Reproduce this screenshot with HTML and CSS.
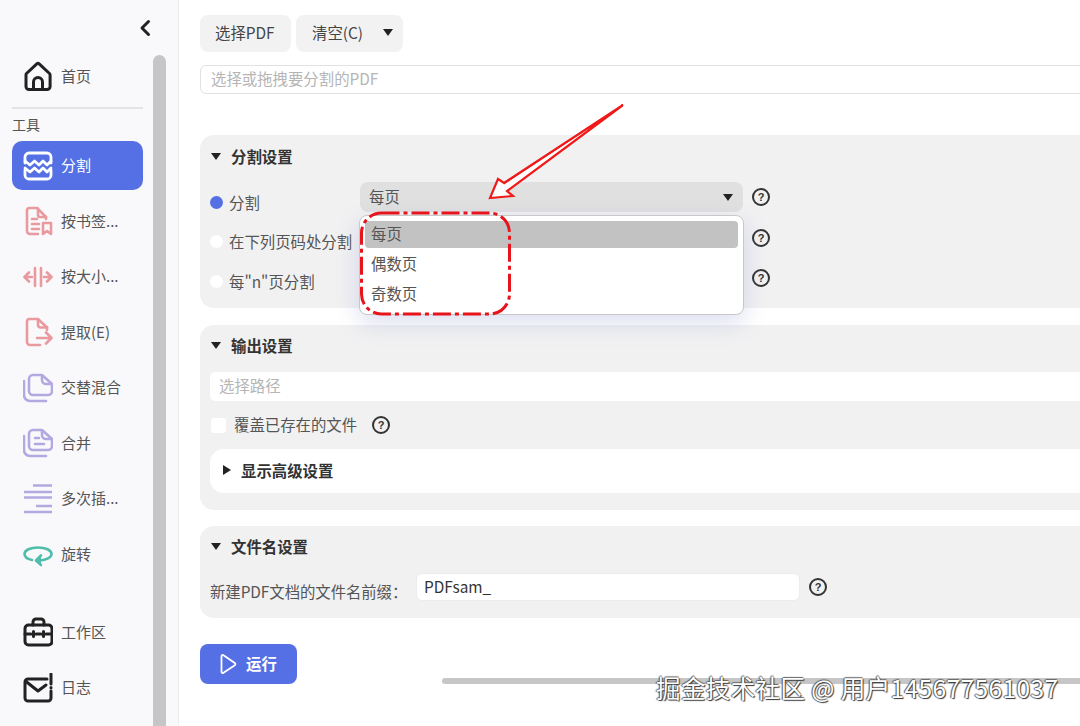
FILE: index.html
```html
<!DOCTYPE html>
<html lang="zh-CN">
<head>
<meta charset="utf-8">
<title>PDFsam 分割</title>
<link rel="stylesheet" href="styles.css">
</head>
<body>
<div class="app">
  <aside class="sidebar">
    <nav class="nav">
      <div class="collapse-row">
        <svg class="collapse-icon" viewBox="0 0 12 18"><path d="M9.5 2.5 3 9l6.5 6.5"/></svg>
      </div>
      <a class="nav-item">
        <svg class="icon" viewBox="0 0 30 30"><g class="st-dark"><path d="M3.500 12.500 13.800 2.800a1.800 1.800 0 0 1 2.400 0L26.500 12.500a2 2 0 0 1 .6 1.500v11.500a3 3 0 0 1-3 3H6a3 3 0 0 1-3-3V14a2 2 0 0 1 .5-1.500z"/><path d="M10.500 28v-7a4.500 4.500 0 0 1 9 0V28"/></g></svg>
        <span>首页</span>
      </a>
      <div class="divider"></div>
      <div class="nav-heading">工具</div>
      <div class="nav-list">
        <a class="nav-item active">
          <svg class="icon" viewBox="0 0 30 30"><g class="st-white"><path d="M2 12V6a4 4 0 0 1 4-4h18a4 4 0 0 1 4 4v6"/><path d="M2 19v5a4 4 0 0 0 4 4h18a4 4 0 0 0 4-4v-5"/><path d="M2 10l5 4 4.500-4 4.500 4 4-4 4 4 4-4"/><path d="M2 17l5 4 4.500-4 4.500 4 4-4 4 4 4-4"/></g></svg>
          <span>分割</span>
        </a>
        <a class="nav-item">
          <svg class="icon" viewBox="0 0 30 30"><g class="st-pink"><path d="M15 28H7a3 3 0 0 1-3-3V4.500A2.500 2.500 0 0 1 6.500 2H14l9 9v2"/><path d="M15 2.500V9a2 2 0 0 0 2 2h6"/><path d="M9 13h5M9 18h7M9 23h7"/><path d="M20 17h8v11l-4-3-4 3z"/></g></svg>
          <span>按书签...</span>
        </a>
        <a class="nav-item">
          <svg class="icon" viewBox="0 0 30 30"><g class="st-pink"><path d="M12 6v18M18 6v18"/><path d="M2 15h7M21 15h7"/><path d="M6 10.500 1.500 15 6 19.500M24 10.500l4.500 4.500-4.500 4.500" /></g></svg>
          <span>按大小...</span>
        </a>
        <a class="nav-item">
          <svg class="icon" viewBox="0 0 30 30"><g class="st-pink"><path d="M24 10v3M17 28H7a3 3 0 0 1-3-3V4.500A2.500 2.500 0 0 1 6.500 2H15l9 8.500"/><path d="M15 2.500V8a2.500 2.500 0 0 0 2.500 2.500H24"/><path d="M14 21h14M23 15.500l5.500 5.500-5.500 5.500"/></g></svg>
          <span>提取(E)</span>
        </a>
        <a class="nav-item">
          <svg class="icon" viewBox="0 0 30 30"><g class="st-purple"><path d="M10 2h9l10 9v7a4 4 0 0 1-4 4H10a4 4 0 0 1-4-4V6a4 4 0 0 1 4-4z"/><path d="M19 2.500V7a4 4 0 0 0 4 4h6"/><path d="M1 8v14a6 6 0 0 0 6 6h16"/></g></svg>
          <span>交替混合</span>
        </a>
        <a class="nav-item">
          <svg class="icon" viewBox="0 0 30 30"><g class="st-purple"><path d="M10 2h9l10 9v7a4 4 0 0 1-4 4H10a4 4 0 0 1-4-4V6a4 4 0 0 1 4-4z"/><path d="M19 2.500V7a4 4 0 0 0 4 4h6"/><path d="M1 8v14a6 6 0 0 0 6 6h16"/><path d="M12 10h4M12 16h9"/></g></svg>
          <span>合并</span>
        </a>
        <a class="nav-item">
          <svg class="icon" viewBox="0 0 30 30"><g class="st-purple st-butt"><path d="M10 1.500h19M1 8h28M1 13.500h28M13 22h16M1 28h28"/></g></svg>
          <span>多次插...</span>
        </a>
        <a class="nav-item">
          <svg class="icon" viewBox="0 0 30 30"><g class="st-teal"><path d="M9 21C4.500 20 1.500 18 1.500 15c0-4 6-6.500 13.500-6.500S28.500 11 28.500 15c0 3.500-5 6-12 6.500"/><path d="M18 16.500l-5 5 5 4.500" class="fill-teal"/></g></svg>
          <span>旋转</span>
        </a>
        <a class="nav-item spaced">
          <svg class="icon" viewBox="0 0 30 30"><g class="st-dark"><rect x="2" y="8" width="27" height="20" rx="3.500"/><path d="M10 8V5a3 3 0 0 1 3-3h5a3 3 0 0 1 3 3v3"/><path d="M2 17h6M13 17h5M23 17h6M10.500 14.500v5M20.500 14.500v5"/></g></svg>
          <span>工作区</span>
        </a>
        <a class="nav-item">
          <svg class="icon" viewBox="0 0 30 30"><g class="st-dark"><path d="M24 6H5a3 3 0 0 0-3 3v16a3 3 0 0 0 3 3h20a3 3 0 0 0 3-3V18"/><path d="M3 8.500 15 18l8-6"/><path d="M28 1v10M28 14.500v.5"/></g></svg>
          <span>日志</span>
        </a>
      </div>
    </nav>
    <div class="side-scroll"></div>
  </aside>

  <main class="main">
    <div class="toolbar">
      <button class="btn btn-pick">选择PDF</button>
      <button class="btn btn-menu">清空(C)<i class="tri tri-down"></i></button>
    </div>
    <div class="field file-field">选择或拖拽要分割的PDF</div>

    <section class="panel split-panel">
      <h2 class="panel-title"><i class="tri tri-down"></i>分割设置</h2>
      <div class="radio-row">
        <label class="radio-label"><i class="radio on"></i>分割</label>
        <div class="select"><span>每页</span><i class="tri tri-down"></i></div>
        <i class="help">?</i>
      </div>
      <div class="radio-row">
        <label class="radio-label"><i class="radio"></i>在下列页码处分割</label>
        <div class="select plain"></div>
        <i class="help">?</i>
      </div>
      <div class="radio-row">
        <label class="radio-label"><i class="radio"></i>每"n"页分割</label>
        <div class="select plain"></div>
        <i class="help">?</i>
      </div>
    </section>

    <section class="panel output-panel">
      <h2 class="panel-title"><i class="tri tri-down"></i>输出设置</h2>
      <div class="field path-field">选择路径</div>
      <div class="check-row">
        <i class="checkbox"></i><span>覆盖已存在的文件</span><i class="help">?</i>
      </div>
      <div class="advanced"><i class="tri tri-right"></i>显示高级设置</div>
    </section>

    <section class="panel name-panel">
      <h2 class="panel-title"><i class="tri tri-down"></i>文件名设置</h2>
      <div class="name-row">
        <label class="name-label">新建PDF文档的文件名前缀：</label>
        <div class="name-input">PDFsam_</div>
        <i class="help">?</i>
      </div>
    </section>

    <button class="run">
      <svg class="run-icon" viewBox="0 0 20 22"><path d="M3.500 3.200v15.600c0 1.200 1.100 1.700 2 1L16.800 12.300c.8-.6.8-1.800 0-2.400L5.500 2.200c-.9-.7-2-.2-2 1z"/></svg><span>运行</span>
    </button>
  </main>
</div>

<ul class="dropdown">
  <li class="selected">每页</li>
  <li>偶数页</li>
  <li>奇数页</li>
</ul>
<svg class="annotation" viewBox="0 0 1080 726">
  <rect class="dash" x="361.500" y="213" width="148" height="101" rx="20"/>
  <path class="arrow" d="M623 105 504 183 498 179 490 198 513 196 507 191Z"/>
  <path class="arrow-inner" d="M623 105 504 184"/>
</svg>
<div class="h-scroll"></div>
<div class="watermark">掘金技术社区 @ 用户145677561037</div>
</body>
</html>
```
FILE: styles.css
```css
* { box-sizing: border-box; }
html, body { margin: 0; height: 100%; overflow: hidden; background: #fff; }
body { font-family: "Noto Sans CJK SC", "Noto Sans", sans-serif; color: #555; font-size: 15.4px; }
i { font-style: normal; }

.app { display: flex; width: 1080px; height: 726px; overflow: hidden; }

/* Sidebar */
.sidebar { flex: 0 0 179px; display: flex; background: #f9f9fb; border-right: 1px solid #eee; }
.nav { flex: 0 0 153px; padding: 0 10px 0 12px; display: flex; flex-direction: column; }
.collapse-row { height: 51.5px; display: flex; justify-content: flex-end; padding-top: 18px; margin-right: -8px; align-items: flex-start; }
.collapse-icon { width: 12px; height: 20px; fill: none; stroke: #222; stroke-width: 3; stroke-linecap: round; stroke-linejoin: round; }
.nav-item { height: 49px; flex: none; display: flex; align-items: center; gap: 8px; padding-left: 11px; border-radius: 10px; font-size: 15px; color: #555; }
.nav-item span { padding-bottom: 2px; }
.nav-item.active { background: #5470e4; color: #fff; }
.nav-item.spaced { margin-top: 22.5px; }
.icon { width: 30px; height: 30px; flex: none; }
.icon g { fill: none; stroke-width: 2.6; stroke-linecap: round; stroke-linejoin: round; }
.st-dark { stroke: #222; stroke-width: 3 !important; }
.st-white { stroke: #fff; stroke-width: 2.8 !important; }
.st-pink { stroke: #e99a9f; }
.st-purple { stroke: #b3a8e0; }
.st-butt { stroke-linecap: butt !important; }
.st-teal { stroke: #4fbdab; }
.fill-teal { fill: #4fbdab; }
.divider { height: 2px; margin-top: 6.5px; background: #e4e4e6; }
.nav-heading { margin-top: 8px; height: 16px; line-height: 14px; font-size: 14px; color: #555; }
.nav-list { margin-top: 8px; display: flex; flex-direction: column; gap: 6.5px; }
.side-scroll { flex: 0 0 13px; margin-top: 55px; background: #c6c6c6; border-radius: 7px 7px 0 0; }

/* Main */
.main { flex: 1; min-width: 0; padding: 15px 0 0 21px; overflow: hidden; }
.toolbar { display: flex; gap: 5px; height: 37px; }
.btn { height: 37px; border: 0; border-radius: 8px; background: #f2f2f3; padding: 0 15px 3px; font: inherit; color: #444; display: flex; align-items: center; }
.btn-pick { width: 91px; }
.btn-menu { width: 107px; padding-left: 16px; justify-content: space-between; padding-right: 10px; }
.tri { display: inline-block; width: 0; height: 0; }
.tri-down { border-left: 5.5px solid transparent; border-right: 5.5px solid transparent; border-top: 7px solid #222; }
.tri-right { border-top: 5.5px solid transparent; border-bottom: 5.5px solid transparent; border-left: 8px solid #222; }
.field { background: #fff; color: #b5b5b5; display: flex; align-items: center; padding-left: 10px; padding-bottom: 3px; }
.file-field { margin-top: 13px; height: 29px; width: 900px; border: 1px solid #e2e2e2; border-radius: 6px; }

.panel { width: 900px; background: #f1f1f2; border-radius: 14px; padding: 0 0 0 10px; }
.panel-title { margin: 0; height: 44px; display: flex; align-items: center; gap: 10px; padding-left: 1px; padding-bottom: 2px; font-size: 15.4px; font-weight: 700; color: #333; }

.split-panel { margin-top: 41px; height: 173px; }
.radio-row { height: 40px; display: flex; align-items: flex-start; padding-top: 3px; }
.radio-row .help { margin-top: 7px; }
.radio-row:first-of-type .help { margin-top: 6px; }
.radio-label { flex: 0 0 150px; display: flex; align-items: center; gap: 6px; height: 30px; padding-top: 10px; white-space: nowrap; }
.radio-row + .radio-row .radio-label { padding-top: 8px; }
.radio { width: 13px; height: 13px; flex: none; border-radius: 50%; background: #fff; }
.radio.on { background: #5470e4; }
.select { flex: 0 0 383px; height: 30px; background: #e0e0e0; border-radius: 8px; display: flex; align-items: center; justify-content: space-between; padding: 0 10px 0 9px; }
.select span { padding-bottom: 3px; }
.select.plain { background: #fff; }
.help { flex: none; width: 18px; height: 18px; margin-left: 9px; border: 2px solid #333; border-radius: 50%; display: flex; align-items: center; justify-content: center; font-size: 11px; font-weight: 700; color: #333; line-height: 1; font-family: "Liberation Sans", sans-serif; }

.output-panel { margin-top: 17px; height: 185px; }
.output-panel .panel-title { height: 42px; }
.path-field { margin-top: 5px; height: 29px; border-radius: 5px; padding-left: 9px; }
.check-row { margin-top: 16px; height: 16px; display: flex; align-items: center; padding-left: 1px; }
.check-row span { padding-bottom: 2px; }
.checkbox { width: 15px; height: 15px; background: #fff; border-radius: 3px; margin-right: 8px; }
.check-row .help { margin-left: 15px; }
.advanced { margin-top: 16px; height: 44px; background: #fff; border-radius: 14px; display: flex; align-items: center; gap: 10px; padding-left: 13px; padding-bottom: 2px; font-weight: 700; color: #333; }

.name-panel { margin-top: 16px; height: 92px; }
.name-panel .panel-title { height: 42px; }
.name-row { margin-top: 5px; display: flex; align-items: flex-start; }
.name-label { flex: 0 0 206px; height: 28px; padding-top: 5px; font-size: 15.4px; line-height: 26px; white-space: nowrap; letter-spacing: -.06px; }
.name-input { flex: 0 0 384px; height: 28px; background: #fff; border-radius: 6px; border: 1px solid #ececec; padding: 0 0 3px 7px; display: flex; align-items: center; color: #333; }
.name-row .help { margin-top: 5px; }

.run { margin-top: 26px; width: 97px; height: 40px; border: 0; border-radius: 8px; background: #5470e4; color: #fff; display: flex; align-items: center; gap: 8px; padding: 0 0 0 18px; font: inherit; font-weight: 700; }
.run span { padding-bottom: 2px; }
.run-icon { width: 20px; height: 22px; fill: none; stroke: #fff; stroke-width: 1.8; }

/* Overlays */
.dropdown { position: absolute; left: 359px; top: 215px; width: 385px; height: 100px; margin: 0; padding: 5px; list-style: none; background: #fff; border: 1px solid #c8c8c8; border-radius: 8px; box-shadow: 0 8px 22px rgba(120, 130, 200, .25); }
.dropdown li { height: 30px; line-height: 24px; padding-left: 6px; color: #555; }
.dropdown .selected { height: 27px; margin-bottom: 3px; background: #c2c2c2; border-radius: 4px; }
.annotation { position: absolute; left: 0; top: 0; width: 1080px; height: 726px; pointer-events: none; }
.dash { fill: none; stroke: #e8141c; stroke-width: 3; stroke-dasharray: 18 4 4 4; }
.arrow { fill: #fff; stroke: #f01a1a; stroke-width: 2.2; stroke-linejoin: miter; }
.arrow-inner { stroke: #f01a1a; stroke-width: 1; fill: none; }
.h-scroll { position: absolute; left: 442px; top: 678px; width: 638px; height: 6px; background: #c6c6c6; border-radius: 3px 0 0 3px; }
.watermark { position: absolute; left: 656px; top: 673px; font-size: 24.5px; letter-spacing: .4px; line-height: 30px; white-space: nowrap; color: #fff; font-family: "Noto Sans CJK SC", sans-serif; text-shadow: 1px 1px 1px #333, -1px 0 1px #555, 0 -1px 1px #666; }
```
